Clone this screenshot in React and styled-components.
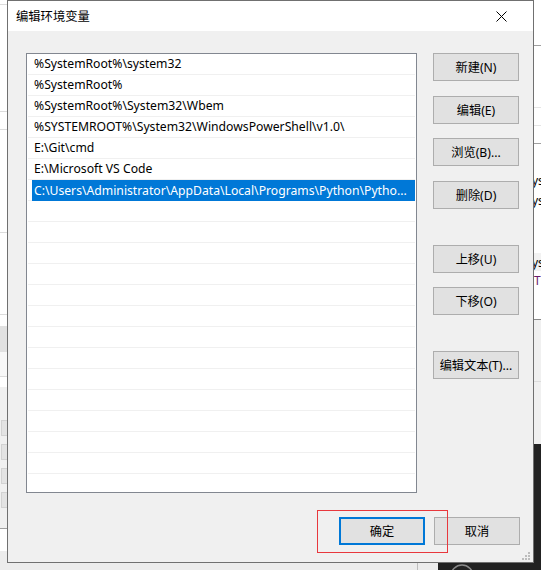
import React from 'react';
import styled, { createGlobalStyle } from 'styled-components';

const GlobalStyle = createGlobalStyle`
  html, body {
    margin: 0;
    padding: 0;
  }
  body {
    width: 541px;
    height: 570px;
    overflow: hidden;
    font-family: "Noto Sans", "Noto Sans CJK SC", sans-serif;
    font-size: 12px;
    color: #000;
  }
`;

const Desktop = styled.div`
  position: relative;
  width: 541px;
  height: 570px;
  overflow: hidden;
  background: #ececec;
  display: flex;
  flex-direction: column;
`;

const TopRow = styled.div`
  height: 563px;
  display: flex;
`;

// slivers of the windows lying behind the dialog
const Strip = styled.div`
  width: 7px;
  flex-shrink: 0;
  display: flex;
  flex-direction: column;
  overflow: hidden;
  ${p => (p.$right ? 'margin-left: auto;' : '')}
`;

const Band = styled.div`
  height: ${p => p.$h}px;
  flex-shrink: 0;
  background: ${p => p.$bg || '#fff'};
  border-top: ${p => (p.$line ? `1px solid ${p.$line}` : 'none')};
  box-sizing: border-box;
  display: flex;
  flex-direction: column;
  gap: ${p => p.$gap || 0}px;
  padding-top: ${p => p.$pt || 0}px;
`;

const Stub = styled.div`
  height: 16px;
  margin-left: 1px;
  background: #e3e3e3;
  border: 1px solid #d2d2d2;
  border-right: none;
  box-sizing: border-box;
`;

const Peek = styled.div`
  height: 20px;
  margin-left: ${p => p.$ml ?? -2}px;
  line-height: 20px;
  font-size: 12px;
  color: ${p => p.$color || '#000'};
  white-space: nowrap;
`;

const BottomStrip = styled.div`
  flex: 1;
  display: flex;
`;

const Segment = styled.div`
  width: ${p => (p.$w ? `${p.$w}px` : 'auto')};
  flex: ${p => (p.$w ? '0 0 auto' : '1')};
  background: ${p => p.$bg};
  overflow: hidden;
  padding-left: ${p => p.$pl || 0}px;
`;

const Window = styled.div`
  position: relative;
  width: 527px;
  height: 563px;
  flex-shrink: 0;
  border: 1px solid #707070;
  box-sizing: border-box;
  background: #f0f0f0;
  display: flex;
  flex-direction: column;
`;

const TitleBar = styled.div`
  height: 30px;
  background: #fff;
  display: flex;
  align-items: center;
  justify-content: space-between;
  padding: 0 26px 0 8px;
  flex-shrink: 0;
`;

const Title = styled.span`
  font-size: 12.3px;
  line-height: 14px;
  margin-top: 1px;
`;

const CloseIcon = styled.svg`
  display: block;
  width: 11px;
  height: 11px;
`;

const Body = styled.div`
  flex: 1;
  display: flex;
  flex-direction: column;
  padding: 22px 13px 17px 18px;
`;

const Main = styled.div`
  display: flex;
  gap: 16px;
`;

const List = styled.div`
  width: 391px;
  height: 440px;
  border: 1px solid #828790;
  box-sizing: border-box;
  background: #fff;
  overflow: hidden;
  padding: 0 1px;
`;

const Row = styled.div`
  height: 21px;
  border-bottom: 1px solid #f0f0f0;
  box-sizing: border-box;
  display: flex;
  align-items: stretch;
  padding-left: 4px;
`;

const Label = styled.div`
  flex: 1;
  display: flex;
  align-items: center;
  padding-left: 2px;
  font-size: 12.2px;
  line-height: 14px;
  white-space: nowrap;
  overflow: hidden;
  background: ${p => (p.$selected ? '#0078d7' : 'transparent')};
  color: ${p => (p.$selected ? '#fff' : '#000')};
  margin-bottom: ${p => (p.$selected ? '-1px' : '0')};
`;

const Side = styled.div`
  display: flex;
  flex-direction: column;
`;

const Button = styled.button`
  width: 86px;
  height: 28px;
  margin: ${p => p.$gap || 0}px 0 0;
  padding: 0;
  background: #e1e1e1;
  border: ${p => (p.$default ? '2px solid #0078d7' : '1px solid #adadad')};
  box-sizing: border-box;
  font-family: inherit;
  font-size: 12.2px;
  color: #000;
  display: flex;
  align-items: center;
  justify-content: center;
`;

const Footer = styled.div`
  margin-top: auto;
  display: flex;
  justify-content: flex-end;
  gap: 9px;
`;

const Grip = styled.svg`
  position: absolute;
  right: 2px;
  bottom: 1px;
  width: 9px;
  height: 9px;
`;

// red highlight drawn over the screenshot
const Mark = styled.div`
  position: absolute;
  left: 317px;
  top: 510px;
  width: 131px;
  height: 43px;
  border: 1px solid #e8383d;
  box-sizing: border-box;
`;

const Ring = styled.svg`
  display: block;
  width: 28px;
  height: 8px;
`;

const paths = [
  '%SystemRoot%\\system32',
  '%SystemRoot%',
  '%SystemRoot%\\System32\\Wbem',
  '%SYSTEMROOT%\\System32\\WindowsPowerShell\\v1.0\\',
  'E:\\Git\\cmd',
  'E:\\Microsoft VS Code',
  'C:\\Users\\Administrator\\AppData\\Local\\Programs\\Python\\Pytho...',
];

const sideButtons = [
  { text: '新建(N)', gap: 0 },
  { text: '编辑(E)', gap: 15 },
  { text: '浏览(B)...', gap: 14 },
  { text: '删除(D)', gap: 15 },
  { text: '上移(U)', gap: 36 },
  { text: '下移(O)', gap: 14 },
  { text: '编辑文本(T)...', gap: 36 },
];

function LeftStrip() {
  return (
    <Strip>
      <Band $h={4} />
      <Band $h={107} $line="#dcdcdc" />
      <Band $h={18} $line="#dcdcdc" />
      <Band $h={103} $line="#dcdcdc" />
      <Band $h={82} $line="#dcdcdc" />
      <Band $h={12} $line="#dcdcdc" />
      <Band $h={26} $bg="#e1e1e1" />
      <Band $h={24} $bg="#f8f8f8" />
      <Band $h={11} $line="#dcdcdc" />
      <Band $h={141} $bg="#f0f0f0" $pt={33} $gap={8}>
        <Stub />
        <Stub />
        <Stub />
        <Stub />
      </Band>
      <Band $h={23} $line="#a0a0a0" />
      <Band $h={12} $bg="#ececec" />
    </Strip>
  );
}

function RightStrip() {
  return (
    <Strip $right>
      <Band $h={45} />
      <Band $h={62} $line="#a0a0a0" />
      <Band $h={18} $line="#e5e5e5" />
      <Band $h={18} $line="#e5e5e5" />
      <Band $h={110} $line="#a0a0a0" $pt={27}>
        <Peek>ys</Peek>
        <Peek>ys</Peek>
      </Band>
      <Band $h={18} $bg="#f2f2f2">
        <Peek>ys</Peek>
      </Band>
      <Band $h={48}>
        <Peek $ml={0} $color="#6a1b6a">T:</Peek>
      </Band>
      <Band $h={62} $bg="#f0f0f0" $line="#8a8a8a" />
      <Band $h={63} $bg="#f0f0f0" $line="#dcdcdc" />
      <Band $h={119} $bg="#222" />
    </Strip>
  );
}

function App() {
  return (
    <Desktop>
      <GlobalStyle />
      <TopRow>
        <LeftStrip />
        <Window>
          <TitleBar>
            <Title>编辑环境变量</Title>
            <CloseIcon viewBox="0 0 11 11">
              <path d="M0.5 0.5 L10.5 10.5 M10.5 0.5 L0.5 10.5" stroke="#000" strokeWidth="1" />
            </CloseIcon>
          </TitleBar>
          <Body>
            <Main>
              <List>
                {Array.from({ length: 21 }).map((_, i) => (
                  <Row key={i}>
                    <Label $selected={i === 6}>{paths[i] || ''}</Label>
                  </Row>
                ))}
              </List>
              <Side>
                {sideButtons.map(b => (
                  <Button key={b.text} $gap={b.gap}>{b.text}</Button>
                ))}
              </Side>
            </Main>
            <Footer>
              <Button $default>确定</Button>
              <Button>取消</Button>
            </Footer>
          </Body>
          <Grip viewBox="0 0 9 9">
            <g fill="#bcbcbc">
              <rect x="6" y="0" width="2" height="2" />
              <rect x="3" y="3" width="2" height="2" />
              <rect x="6" y="3" width="2" height="2" />
              <rect x="0" y="6" width="2" height="2" />
              <rect x="3" y="6" width="2" height="2" />
              <rect x="6" y="6" width="2" height="2" />
            </g>
          </Grip>
        </Window>
        <RightStrip />
      </TopRow>
      <BottomStrip>
        <Segment $w={417} $bg="#ececec" />
        <Segment $w={1} $bg="#bdbdbd" />
        <Segment $w={20} $bg="#ececec" />
        <Segment $bg="#222" $pl={10}>
          <Ring viewBox="0 0 28 8">
            <circle cx="14" cy="13" r="11" fill="none" stroke="#8a8a8a" strokeWidth="1.5" />
          </Ring>
        </Segment>
      </BottomStrip>
      <Mark />
    </Desktop>
  );
}

export default App;
